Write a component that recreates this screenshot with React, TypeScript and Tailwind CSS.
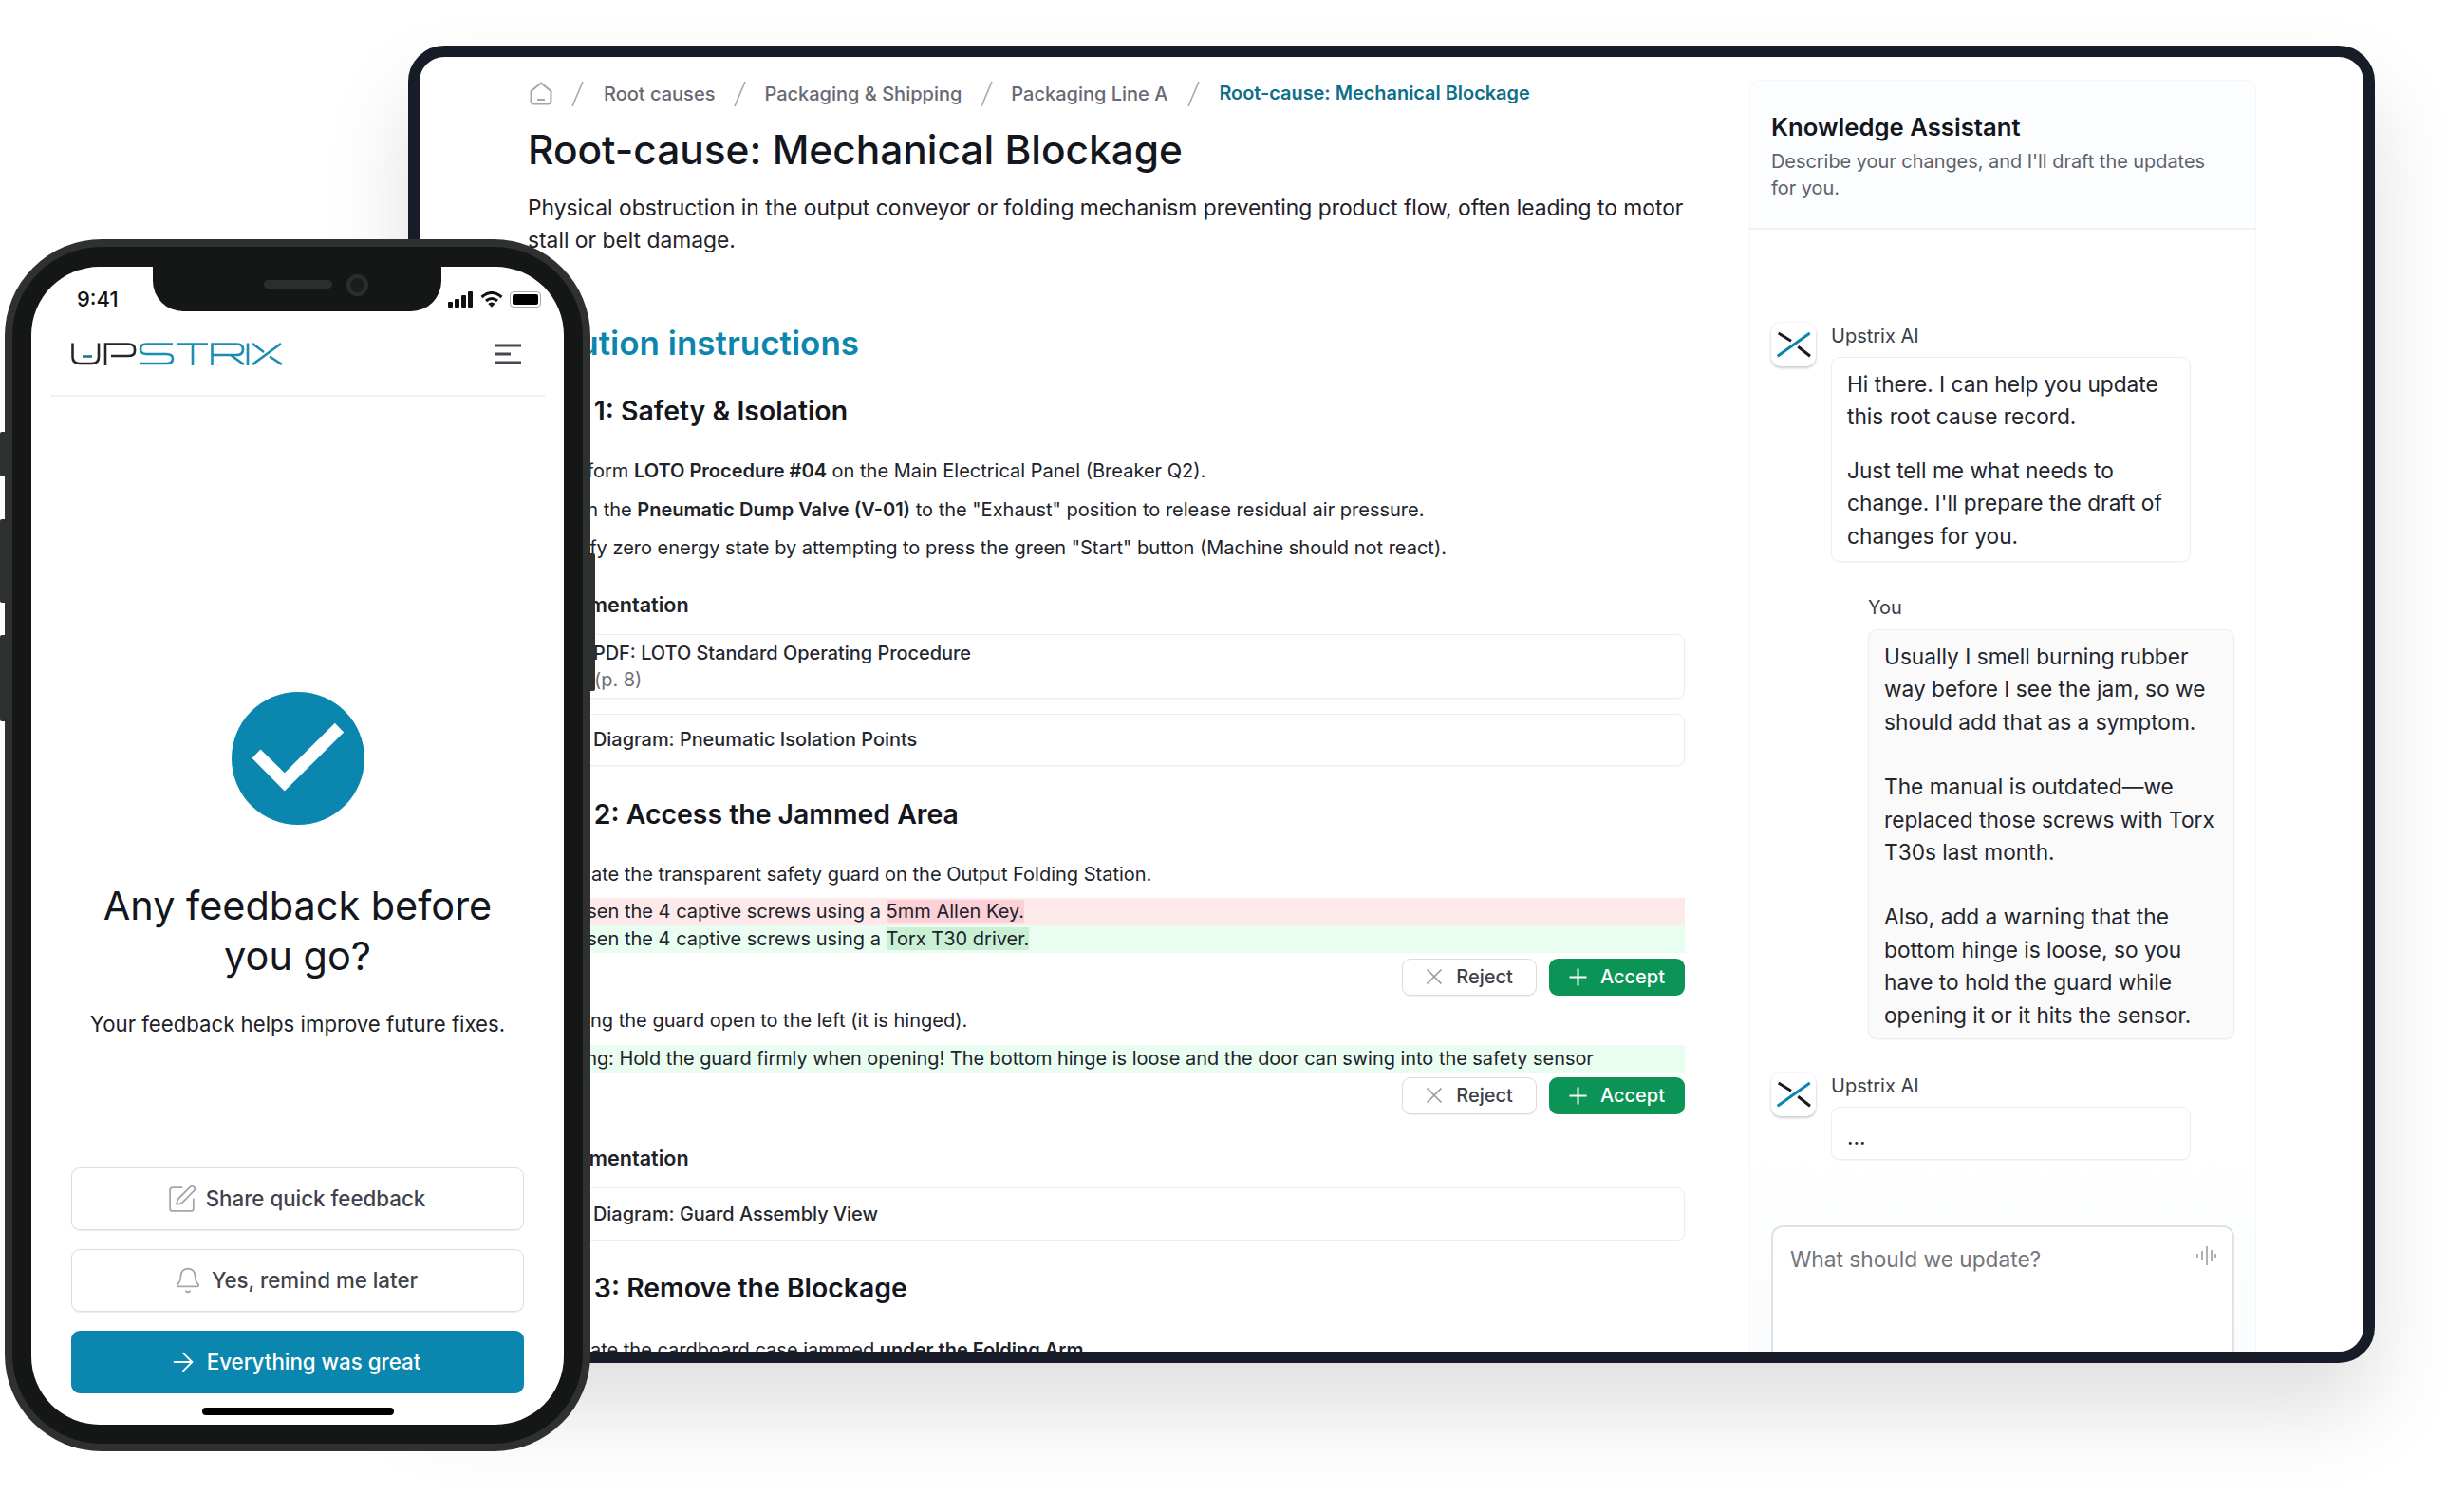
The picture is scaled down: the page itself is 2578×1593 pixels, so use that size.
import React from "react";
import { ArrowRight, Bell, SquarePen } from "lucide-react";

function Mark() {
  return (
    <div className="w-[47px] h-[46px] -mt-[2px] rounded-[10px] bg-white shadow-[0_2px_3px_rgba(0,0,0,0.18),0_0_3px_rgba(0,0,0,0.08)] shrink-0">
      <svg width="47" height="46" viewBox="0 0 47 46" fill="none">
        <path d="M6.7 35.3 L40.7 11" stroke="#0b86ae" strokeWidth="3" />
        <path d="M7.7 11 L21 19.3 M28.3 25.3 L41 35.3" stroke="#1b1b1f" strokeWidth="3" />
      </svg>
    </div>
  );
}

function Logo() {
  return (
    <svg width="225" height="24" viewBox="0 0 225 24" fill="none" strokeWidth="2.6">
      <path d="M1.5 0.5 V15 Q1.5 22 9 22 H22 Q29 22 29 15 V0.5" stroke="#25252b" />
      <path d="M12 14.5 H22" stroke="#1a6f8c" strokeWidth="2.6" />
      <path d="M36 24 V1.5 H60 Q67 1.5 67 7 V9 Q67 14 60 14 H42" stroke="#25252b" />
      <path d="M107 1.5 H79 Q73 1.5 73 6.5 Q73 12 79 12 H100 Q107 12 107 17 Q107 22 100 22 H72" stroke="#1b8db3" />
      <path d="M112 1.5 H144 M128 1.5 V24" stroke="#1b8db3" />
      <path d="M148.5 24 V1.5 H174 Q181 1.5 181 7 Q181 13 174 13 H148.5 M168 13 L182 23" stroke="#1b8db3" />
      <path d="M186 0.5 V24" stroke="#1b8db3" />
      <path d="M191 23 L221 1" stroke="#1b8db3" />
      <path d="M191 1 L203 10 M209 14.5 L222 23" stroke="#1b8db3" />
    </svg>
  );
}

function DocBox({ children, h }: { children: React.ReactNode; h: string }) {
  return (
    <div className={`ml-[19px] mt-[16px] rounded-[8px] border border-[#eeeeef] shadow-[0_1px_1px_rgba(0,0,0,0.04)] pl-[49px] flex flex-col justify-center text-[19.9px] leading-[28px] font-medium text-[#25272e] ${h}`}>
      {children}
    </div>
  );
}

function Actions({ mt }: { mt: string }) {
  return (
    <div className={`flex justify-end gap-[13px] ${mt}`}>
      <div className="w-[142px] h-[39px] rounded-[9px] border border-[#dcdcdf] shadow-[0_1px_1px_rgba(0,0,0,0.06)] bg-white flex items-center justify-center gap-[14px] text-[20px] font-medium text-[#3d3f49]">
        <svg width="18" height="18" viewBox="0 0 18 18" fill="none" stroke="#9a9a9f" strokeWidth="1.7">
          <path d="M1.5 1.5 L16.5 16.5 M16.5 1.5 L1.5 16.5" />
        </svg>
        Reject
      </div>
      <div className="w-[143px] h-[39px] rounded-[9px] bg-[#0b9455] flex items-center justify-center gap-[14px] text-[20px] font-medium text-white">
        <svg width="19" height="19" viewBox="0 0 19 19" fill="none" stroke="#ffffff" strokeWidth="2">
          <path d="M9.5 0.5 V18.5 M0.5 9.5 H18.5" />
        </svg>
        Accept
      </div>
    </div>
  );
}

function Crumb() {
  return (
    <svg width="14" height="30" viewBox="0 0 14 30" fill="none" className="shrink-0">
      <path d="M13 2 L2 28" stroke="#a9abb0" strokeWidth="1.7" />
    </svg>
  );
}

function Phone() {
  return (
    <div className="absolute left-[5px] top-[252px] z-10">
      <div className="absolute -left-[5px] top-[203px] w-[6px] h-[47px] bg-[#2f3030] rounded-l-[2px]" />
      <div className="absolute -left-[5px] top-[295px] w-[6px] h-[88px] bg-[#2f3030] rounded-l-[2px]" />
      <div className="absolute -left-[5px] top-[417px] w-[6px] h-[91px] bg-[#2f3030] rounded-l-[2px]" />
      <div className="absolute left-[616px] top-[331px] w-[6px] h-[145px] bg-[#2f3030] rounded-r-[2px]" />
      <div className="relative w-[617px] h-[1277px] rounded-[102px] bg-[#2f3030] p-[8px]">
        <div className="w-full h-full rounded-[94px] bg-[#151717] px-[20px] pt-[21px] pb-[20px]">
          <div className="relative w-[561px] h-[1220px] rounded-[72px] bg-white overflow-hidden flex flex-col">
            <div className="absolute left-[128px] top-0 w-[304px] h-[47px] bg-[#151717] rounded-b-[32px]">
              <div className="absolute left-[117px] top-[14px] w-[72px] h-[9px] rounded-full bg-[#2a2e2e]" />
              <div className="absolute left-[204px] top-[8px] w-[23px] h-[23px] rounded-full bg-[#1c1e1e] border-[4px] border-[#2a2e2e]" />
            </div>
            <div className="h-[47px] shrink-0 relative">
              <span className="absolute left-[48px] top-[20px] text-[22px] leading-[28px] font-medium text-[#111]">9:41</span>
              <svg className="absolute left-[439px] top-[26px]" width="26" height="17" viewBox="0 0 26 17" fill="#111">
                <rect x="0" y="11" width="5" height="6" rx="1" />
                <rect x="7" y="8" width="5" height="9" rx="1" />
                <rect x="14" y="4" width="5" height="13" rx="1" />
                <rect x="21" y="0" width="5" height="17" rx="1" />
              </svg>
              <svg className="absolute left-[473px] top-[26px]" width="24" height="17" viewBox="0 0 24 17" fill="none" stroke="#111" strokeWidth="3">
                <path d="M1.5 6 Q12 -3 22.5 6" />
                <path d="M6 10 Q12 5 18 10" />
                <path d="M12 16.5 L8.6 13 Q12 10.5 15.4 13 Z" fill="#111" strokeWidth="0.5" />
              </svg>
              <div className="absolute left-[504px] top-[26px] w-[33px] h-[17px] rounded-[4px] border border-[#a8a8a8] p-[2px]">
                <div className="w-full h-full rounded-[2px] bg-black" />
              </div>
            </div>
            <div className="h-[90px] shrink-0 mx-[20px] px-[22px] pt-[2px] border-b-2 border-[#f0f0f1] flex items-center justify-between">
              <Logo />
              <svg width="28" height="22" viewBox="0 0 28 22" stroke="#47474f" strokeWidth="3" fill="none" className="mr-[3px]">
                <path d="M0 2 H28 M0 11 H17 M0 20 H28" />
              </svg>
            </div>
            <div className="flex flex-col items-center pt-[311px]">
              <div className="w-[140px] h-[140px] rounded-full bg-[#0b86ae]">
                <svg width="140" height="140" viewBox="0 0 140 140">
                  <polygon points="21.5,69.8 30.5,60.5 55.8,85.2 108.8,32.8 118.2,42.5 55.8,104.5" fill="#ffffff" />
                </svg>
              </div>
              <div className="mt-[59px] text-[41.4px] leading-[53px] text-center text-[#14161d]">
                Any feedback before<br />you go?
              </div>
              <div className="mt-[29px] text-[22.2px] leading-[32px] text-[#1d1f27]">Your feedback helps improve future fixes.</div>
            </div>
            <div className="mt-[135px] mx-[42px] flex flex-col gap-[20px]">
              <div className="h-[66px] rounded-[9px] border border-[#dcdde0] shadow-[0_1px_1px_rgba(0,0,0,0.08)] flex items-center justify-center gap-[9px] text-[22.3px] font-medium text-[#3f414b]">
                <SquarePen size={33} strokeWidth={1.3} color="#a5a6a9" className="-ml-[4px]" />
                Share quick feedback
              </div>
              <div className="h-[66px] rounded-[9px] border border-[#dcdde0] shadow-[0_1px_1px_rgba(0,0,0,0.08)] flex items-center justify-center gap-[10px] text-[22.3px] font-medium text-[#3f414b]">
                <Bell size={30} strokeWidth={1.4} color="#a5a6a9" className="-ml-[4px]" />
                Yes, remind me later
              </div>
              <div className="h-[66px] rounded-[9px] bg-[#0b86ae] flex items-center justify-center gap-[9px] text-[22.3px] font-medium text-white">
                <ArrowRight size={32} strokeWidth={1.4} color="#ffffff" className="-ml-[7px]" />
                Everything was great
              </div>
            </div>
            <div className="mt-[15px] self-center w-[202px] h-[8px] rounded-full bg-black" />
          </div>
        </div>
      </div>
    </div>
  );
}

function Main() {
  return (
    <div className="w-[1219px] ml-[114px] shrink-0 pt-[18px] text-[#20222a]">
      <div className="h-[40px] pt-[1px] flex items-center text-[20px] font-medium text-[#676973]">
        <svg width="24" height="25" viewBox="0 0 24 25" fill="none" stroke="#a4a5a9" strokeWidth="2" className="shrink-0 ml-[2px]">
          <path d="M1.5 10 L12 1.5 L22.5 10 V20.5 Q22.5 23.5 19.5 23.5 H4.5 Q1.5 23.5 1.5 20.5 Z" />
          <path d="M8 19 H16" />
        </svg>
        <div className="ml-[19px] mr-[21px]"><Crumb /></div>
        <span>Root causes</span>
        <div className="mx-[19px]"><Crumb /></div>
        <span>Packaging &amp; Shipping</span>
        <div className="mx-[19px]"><Crumb /></div>
        <span>Packaging Line A</span>
        <div className="ml-[20px] mr-[20px]"><Crumb /></div>
        <span className="text-[#0e6f8a] font-semibold text-[19.9px]">Root-cause: Mechanical Blockage</span>
      </div>
      <h1 className="mt-[9px] text-[42.4px] leading-[62px] font-medium text-[#14161d]">Root-cause: Mechanical Blockage</h1>
      <p className="mt-[13px] -mr-[30px] text-[22.8px] leading-[34px] text-[#1f2129]">
        Physical obstruction in the output conveyor or folding mechanism preventing product flow, often leading to motor<br />stall or belt damage.
      </p>
      <h2 className="mt-[69px] text-[35px] leading-[44px] font-semibold text-[#0b86ae]">Solution instructions</h2>
      <h3 className="mt-[32px] text-[28.4px] leading-[36px] font-semibold text-[#14161d]">Step 1: Safety &amp; Isolation</h3>
      <div className="mt-[25px] text-[20px] leading-[40.5px] text-[#20222a]">
        <div className="pl-[30px]">Perform <b className="font-semibold">LOTO Procedure #04</b> on the Main Electrical Panel (Breaker Q2).</div>
        <div className="pl-[23px]">Open the <b className="font-semibold">Pneumatic Dump Valve (V-01)</b> to the "Exhaust" position to release residual air pressure.</div>
        <div className="pl-[28px]">Verify zero energy state by attempting to press the green "Start" button (Machine should not react).</div>
      </div>
      <h4 className="mt-[24px] ml-[10px] text-[21.6px] leading-[30px] font-semibold text-[#20222a]">Documentation</h4>
      <DocBox h="h-[68px]">
        <div>PDF: LOTO Standard Operating Procedure</div>
        <div className="text-[#6d6f78] font-normal pl-[1px]">(p. 8)</div>
      </DocBox>
      <DocBox h="h-[55px]">Diagram: Pneumatic Isolation Points</DocBox>
      <h3 className="mt-[33px] text-[28.4px] leading-[36px] font-semibold text-[#14161d]">Step 2: Access the Jammed Area</h3>
      <div className="mt-[30px] pl-[32px] text-[20px] leading-[30px]">Locate the transparent safety guard on the Output Folding Station.</div>
      <div className="mt-[10px] text-[20px] leading-[29px]">
        <div className="pl-[27px] bg-[#fde8ea]">Loosen the 4 captive screws using a <span className="bg-[#fbd0d6]">5mm Allen Key.</span></div>
        <div className="pl-[27px] bg-[#e9fdf0]">Loosen the 4 captive screws using a <span className="bg-[#c9f0d4]">Torx T30 driver.</span></div>
      </div>
      <Actions mt="mt-[6px]" />
      <div className="mt-[11px] pl-[32px] text-[20px] leading-[30px]">Swing the guard open to the left (it is hinged).</div>
      <div className="mt-[11px] pl-[7px] bg-[#e9fdf0] text-[19.9px] leading-[29px]">Warning: Hold the guard firmly when opening! The bottom hinge is loose and the door can swing into the safety sensor</div>
      <Actions mt="mt-[5px]" />
      <h4 className="mt-[31px] ml-[10px] text-[21.6px] leading-[30px] font-semibold text-[#20222a]">Documentation</h4>
      <DocBox h="h-[56px]">Diagram: Guard Assembly View</DocBox>
      <h3 className="mt-[32px] text-[28.4px] leading-[36px] font-semibold text-[#14161d]">Step 3: Remove the Blockage</h3>
      <div className="mt-[32px] pl-[31px] text-[20px] leading-[30px]">Locate the cardboard case jammed <b className="font-semibold">under the Folding Arm.</b></div>
    </div>
  );
}

function Bubble({ children, className }: { children: React.ReactNode; className: string }) {
  return (
    <div className={`rounded-[9px] border border-[#eeeeef] shadow-[0_1px_1px_rgba(0,0,0,0.04)] text-[22.7px] leading-[34.4px] text-[#23252d] ${className}`}>
      {children}
    </div>
  );
}

function Panel() {
  return (
    <div className="w-[534px] ml-[68px] mt-[24px] shrink-0 rounded-t-[10px] border border-[#f5f6f7] bg-gradient-to-b from-white from-80% to-[#f9fcfd] flex flex-col h-[1400px]">
      <div className="h-[157px] shrink-0 bg-[#fbfdfe] rounded-t-[10px] border-b-2 border-[#eff1f2] px-[22px] pt-[31px]">
        <div className="text-[25.7px] leading-[36px] font-semibold text-[#14161d]">Knowledge Assistant</div>
        <div className="mt-[4px] text-[19.9px] leading-[28px] text-[#5f616b]">Describe your changes, and I'll draft the updates for you.</div>
      </div>
      <div className="pl-[22px] pt-[100px] flex">
        <Mark />
        <div className="ml-[16px]">
          <div className="text-[20px] leading-[24px] text-[#3c3e47]">Upstrix AI</div>
          <Bubble className="mt-[10px] w-[379px] h-[216px] pl-[16px] pr-[10px] pt-[11px]">
            Hi there. I can help you update this root cause record.
            <div className="mt-[22px]">Just tell me what needs to change. I'll prepare the draft of changes for you.</div>
          </Bubble>
        </div>
      </div>
      <div className="ml-[124px] mt-[36px]">
        <div className="text-[20px] leading-[24px] text-[#3c3e47]">You</div>
        <Bubble className="mt-[11px] w-[386px] h-[432px] pl-[16px] pr-[8px] pt-[11px] bg-[#fafafa]">
          Usually I smell burning rubber way before I see the jam, so we should add that as a symptom.
          <div className="mt-[34px]">The manual is outdated—we replaced those screws with Torx T30s last month.</div>
          <div className="mt-[34px]">Also, add a warning that the bottom hinge is loose, so you have to hold the guard while opening it or it hits the sensor.</div>
        </Bubble>
      </div>
      <div className="pl-[22px] mt-[37px] flex">
        <Mark />
        <div className="ml-[16px]">
          <div className="text-[20px] leading-[24px] text-[#3c3e47]">Upstrix AI</div>
          <Bubble className="mt-[10px] w-[379px] h-[56px] pl-[16px] pt-[14px] bg-white">...</Bubble>
        </div>
      </div>
      <div className="relative mt-[69px] ml-[22px] w-[488px] h-[200px] rounded-[12px] border-2 border-[#dfe3e6] bg-white px-[18px] pt-[17px] text-[22.7px] leading-[34px] text-[#73757d]">
        What should we update?
        <svg className="absolute right-[17px] top-[19px]" width="22" height="22" viewBox="0 0 22 22" stroke="#9b9da2" strokeWidth="1.6" fill="none">
          <path d="M2 9 V13 M7 6 V16 M12 1 V21 M17 5 V17 M21 9 V13" />
        </svg>
      </div>
    </div>
  );
}

export default function App() {
  return (
    <div className="relative w-[2578px] h-[1593px] bg-white overflow-hidden [font-family:Inter,sans-serif]">
      <div className="pl-[430px] pt-[48px]">
        <div className="w-[2072px] h-[1388px] rounded-[38px] border-[12px] border-[#171c28] bg-white overflow-hidden flex shadow-[0_50px_90px_rgba(0,0,0,0.13)]">
          <Main />
          <Panel />
        </div>
      </div>
      <Phone />
    </div>
  );
}
